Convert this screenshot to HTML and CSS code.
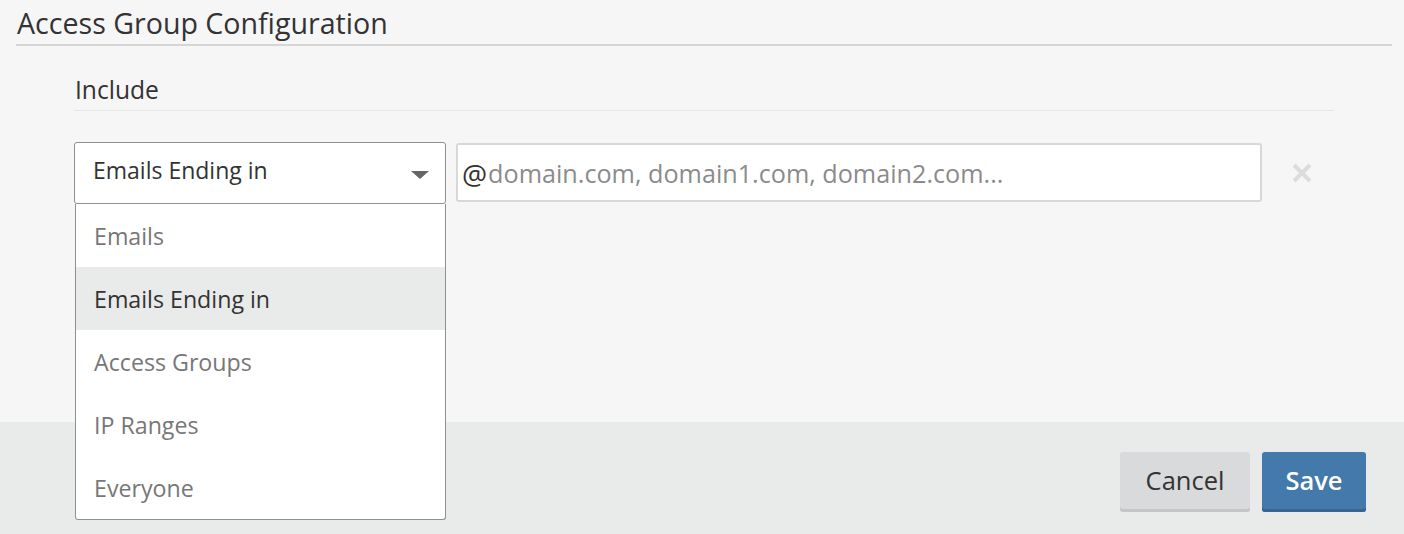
FILE: index.html
```html
<!DOCTYPE html>
<html>
<head>
<meta charset="utf-8">
<link rel="stylesheet" href="styles.css">
</head>
<body>
<div class="page">
  <div class="content">
    <h1 class="title">Access Group Configuration</h1>
    <div class="section">
      <h2 class="section-title">Include</h2>
      <div class="rule-row">
        <div class="select-wrap">
          <div class="select">
            <span class="select-value">Emails Ending in</span>
            <span class="caret"></span>
          </div>
          <ul class="menu">
            <li class="menu-item">Emails</li>
            <li class="menu-item active">Emails Ending in</li>
            <li class="menu-item">Access Groups</li>
            <li class="menu-item">IP Ranges</li>
            <li class="menu-item">Everyone</li>
          </ul>
        </div>
        <div class="input">
          <span class="at">@</span><span class="placeholder">domain.com, domain1.com, domain2.com...</span>
        </div>
        <div class="remove">
          <svg width="22" height="22" viewBox="0 0 22 22"><path d="M3 3 L19 19 M19 3 L3 19" stroke="#dcdcdc" stroke-width="4" stroke-linecap="butt"/></svg>
        </div>
      </div>
    </div>
  </div>
  <div class="footer">
    <button class="btn btn-cancel">Cancel</button>
    <button class="btn btn-save">Save</button>
  </div>
</div>
</body>
</html>
```

FILE: styles.css
```css
* { box-sizing: border-box; }
html, body { margin: 0; padding: 0; }
body {
  font-family: "Open Sans", "Noto Sans", sans-serif;
  background: #f6f6f6;
  color: #333;
}
.page {
  width: 1404px;
  height: 534px;
  display: flex;
  flex-direction: column;
}
.content {
  height: 422px;
  padding: 0 12px 0 16px;
  background: #f6f6f6;
}
.title {
  margin: 0;
  padding: 4px 0 0 1px;
  height: 46px;
  font-size: 28.6px;
  font-weight: 400;
  line-height: 38px;
  color: #333;
  border-bottom: 2px solid #d6d6d6;
}
.section {
  padding: 0 58px 0 58px;
}
.section-title {
  margin: 0;
  padding: 29px 0 0 1px;
  height: 65px;
  font-size: 24.6px;
  font-weight: 400;
  line-height: 30px;
  color: #333;
  border-bottom: 1px solid #e6e6e6;
}
.rule-row {
  margin-top: 31px;
  display: flex;
  align-items: flex-start;
}
.select-wrap {
  position: relative;
  width: 372px;
}
.select {
  height: 62px;
  border: 1px solid #8d9092;
  border-radius: 3px;
  background: #fff;
  display: flex;
  align-items: center;
  justify-content: space-between;
  padding: 0 16px 0 18px;
}
.select-value {
  font-size: 23px;
  color: #333;
  line-height: 30px;
  margin-top: -6px;
}
.caret {
  width: 0;
  height: 0;
  border-left: 9px solid transparent;
  border-right: 9px solid transparent;
  border-top: 8px solid #666;
  margin-top: 4px;
}
.menu {
  position: absolute;
  left: 1px;
  top: 62px;
  width: 371px;
  margin: 0;
  padding: 0;
  list-style: none;
  background: #fff;
  border: 1px solid #8d9092;
  border-top: none;
  border-radius: 0 0 3px 3px;
}
.menu-item {
  height: 63px;
  display: flex;
  align-items: center;
  padding-left: 18px;
  font-size: 23.2px;
  color: #777;
}
.menu-item.active {
  background: #e9ebea;
  color: #333;
}
.input {
  margin-left: 10px;
  width: 806px;
  height: 59px;
  margin-top: 1px;
  border: 2px solid #d8d8d8;
  border-radius: 3px;
  background: #fff;
  display: flex;
  align-items: center;
  padding-left: 4px;
  font-size: 25.2px;
}
.at { color: #333; font-size: 28px; margin-right: 1px; margin-top: 2px; }
.placeholder { color: #8b8b8b; }
.remove {
  margin-left: 29px;
  margin-top: 20px;
  width: 22px;
  height: 22px;
}
.remove svg { display: block; }
.footer {
  flex: 1;
  background: #e9eaea;
  display: flex;
  justify-content: flex-end;
  align-items: flex-start;
  padding: 30px 38px 0 0;
  gap: 12px;
}
.btn {
  height: 60px;
  border: none;
  border-radius: 3px;
  font-family: "Open Sans", "Noto Sans", sans-serif;
  font-size: 25.5px;
  line-height: 34px;
  padding: 0 0 4px 0;
  cursor: pointer;
}
.btn-cancel {
  width: 130px;
  background: #d9dadb;
  color: #333;
  box-shadow: inset 0 -3px 0 #c4c5c6;
}
.btn-save {
  width: 104px;
  background: #4379ab;
  color: #fff;
  font-weight: 600;
  box-shadow: inset 0 -3px 0 #386592;
}
```
